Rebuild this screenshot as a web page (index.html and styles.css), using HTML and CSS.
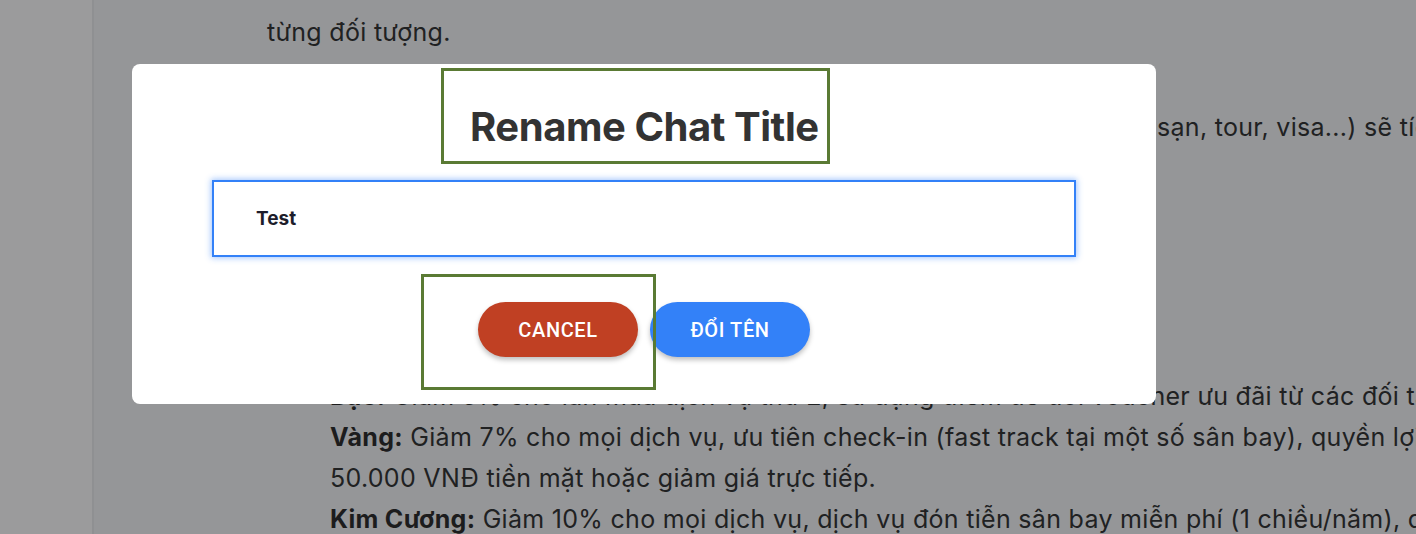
FILE: index.html
```html
<!DOCTYPE html>
<html lang="vi">
<head>
<meta charset="utf-8">
<title>Rename Chat Title</title>
<link rel="stylesheet" href="styles.css">
</head>
<body>
<div class="app">
  <aside class="sidebar"></aside>
  <main class="content">
    <p class="line first">từng đối tượng.</p>
    <p class="line second">sạn, tour, visa...) sẽ tích lũy điểm thưởng</p>
    <div class="tiers">
      <p class="line tier"><b>Bạc:</b> Giảm 5% cho lần mua dịch vụ thứ 2, sử dụng điểm để đổi voucher ưu đãi từ các đối tác</p>
      <p class="line tier"><b>Vàng:</b> Giảm 7% cho mọi dịch vụ, ưu tiên check-in (fast track tại một số sân bay), quyền lợi nhận</p>
      <p class="line tier">50.000 VNĐ tiền mặt hoặc giảm giá trực tiếp.</p>
      <p class="line tier"><b>Kim Cương:</b> Giảm 10% cho mọi dịch vụ, dịch vụ đón tiễn sân bay miễn phí (1 chiều/năm), quà tặng</p>
    </div>
  </main>
</div>

<div class="overlay">
  <div class="modal">
    <h2 class="modal-title">Rename Chat Title</h2>
    <input class="name-input" type="text" value="Test">
    <div class="actions">
      <button class="btn btn-cancel" type="button">CANCEL</button>
      <button class="btn btn-rename" type="button">ĐỔI TÊN</button>
    </div>
    <div class="highlight-cancel"></div>
  </div>
</div>
</body>
</html>
```

FILE: styles.css
```css
html, body {
  margin: 0;
  padding: 0;
  height: 100%;
}

body {
  font-family: "Inter", "Noto Sans", sans-serif;
  overflow: hidden;
}

.app {
  display: flex;
  height: 534px;
  background: #959698;
}

.sidebar {
  width: 92px;
  flex: none;
  background: #9b9b9c;
  border-right: 2px solid #8f9092;
}

.content {
  flex: 1;
  overflow: hidden;
  padding-left: 173px;
  color: #202122;
}

.line {
  margin: 0;
  font-size: 25px;
  line-height: 41px;
  white-space: nowrap;
  letter-spacing: 0.3px;
}

.line b {
  font-weight: 700;
  color: #1c1c1d;
}

.first {
  margin-top: 12px;
}

.second {
  margin-top: 54px;
  margin-left: 890px;
}

.tiers {
  margin-top: 228px;
  padding-left: 63px;
}

.overlay {
  position: fixed;
  inset: 0;
  padding: 64px 0 0 132px;
}

.modal {
  position: relative;
  width: 1024px;
  height: 340px;
  box-sizing: border-box;
  background: #ffffff;
  border-radius: 8px;
  padding: 4px 80px 0;
  display: flex;
  flex-direction: column;
}

.modal-title {
  align-self: flex-start;
  margin: 0 0 0 229px;
  box-sizing: border-box;
  width: 389px;
  height: 96px;
  border: 3px solid #5a7a34;
  padding: 21px 0 0 26px;
  font-size: 40px;
  line-height: 70px;
  font-weight: 700;
  letter-spacing: -0.45px;
  color: #333333;
  white-space: nowrap;
}

.name-input {
  margin-top: 16px;
  box-sizing: border-box;
  width: 864px;
  height: 77px;
  border: 2px solid #3381f8;
  border-radius: 0;
  box-shadow: 0 0 6px 1px rgba(51, 129, 248, 0.45);
  outline: none;
  padding: 0 0 0 42px;
  font-family: "Inter", "Noto Sans", sans-serif;
  font-size: 19px;
  font-weight: 700;
  color: #1d1d2b;
  background: #ffffff;
}

.actions {
  margin-top: 45px;
  display: flex;
  justify-content: center;
  gap: 12px;
}

.btn {
  width: 160px;
  height: 55px;
  border: none;
  border-radius: 28px;
  color: #ffffff;
  font-family: "Roboto", "Noto Sans", sans-serif;
  font-size: 20px;
  font-weight: 500;
  letter-spacing: 0.6px;
  box-shadow: 0 3px 5px rgba(0, 0, 0, 0.25);
  cursor: pointer;
}

.btn-cancel {
  background: #c04023;
}

.btn-rename {
  background: #3381f8;
}

.highlight-cancel {
  position: absolute;
  left: 289px;
  top: 210px;
  width: 235px;
  height: 116px;
  box-sizing: border-box;
  border: 3px solid #5a7a34;
  pointer-events: none;
}
```
